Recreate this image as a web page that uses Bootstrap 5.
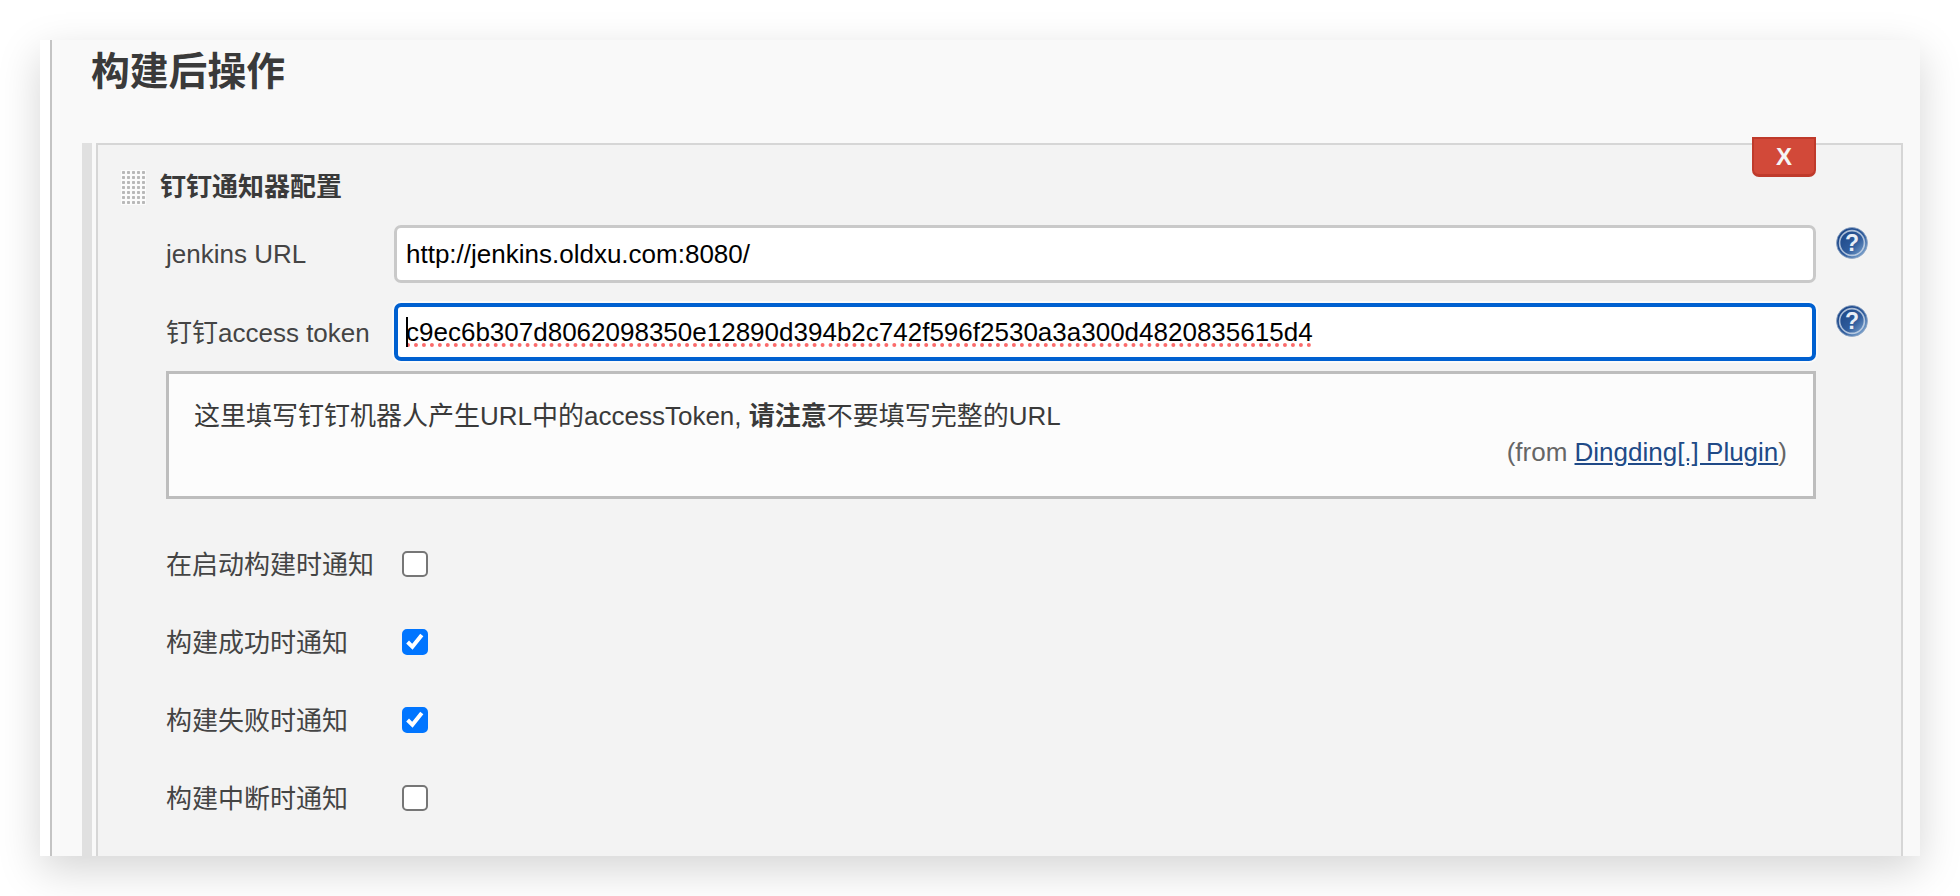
<!DOCTYPE html>
<html lang="zh-CN">
<head>
<meta charset="utf-8">
<title>构建后操作</title>
<link rel="stylesheet" href="https://cdn.jsdelivr.net/npm/bootstrap@5.3.0/dist/css/bootstrap.min.css">
<style>
html,body{height:896px;overflow:hidden;background:#fff}
body{padding:40px;font-family:"Liberation Sans","Noto Sans CJK SC",sans-serif;font-size:26px;color:#333}
.shot-window{height:816px;background:#fff;padding-left:10px;overflow:hidden;box-shadow:0 14px 40px rgba(0,0,0,.17)}
.shot-inner{height:100%;background:#f9f9f9;border-left:2px solid #c4c4c4;display:flex;flex-direction:column}
.shot-heading{font-size:38.8px;line-height:50px;font-weight:700;margin:7px 0 46px 39px;color:#3a3a3a}
.shot-stripe{flex:1 1 auto;margin:0 17px 0 30px;border-left:10px solid #e0e0e0;padding-left:4px;display:flex;min-height:0}
.shot-panel{flex:1 1 auto;position:relative;background:#f3f3f3;border:solid #d6d6d6;border-width:2px 2px 0 2px;padding:25px 33px 0 23px}
.shot-close{position:absolute;top:-8px;right:85px;width:64px;height:40px;padding:0;background:#d24939;border:solid #bf3a2b;border-width:2px 2px 3px;border-radius:0 0 7px 7px;color:#f5f5f5;font:700 24px/34px "Liberation Sans",sans-serif}
.shot-close:hover{background:#d24939;color:#f5f5f5}
.shot-titlerow{height:35px;margin-bottom:20px;gap:14px}
.shot-grip{width:25px;height:35px;flex:none;background:#fbfbfb radial-gradient(circle,#b8b8b8 38%,transparent 50%) 0 0/5px 5px}
.shot-title{font-size:26px;line-height:35px;font-weight:700;color:#3a3a3a}
.shot-form{padding-left:45px}
.shot-label{width:228px;flex:none;color:#444;margin:0}
.shot-label-low{padding-top:2px}
.shot-field{flex:1 1 auto;position:relative;min-width:0}
.form-control.shot-input{height:58px;font-size:26px;color:#000;background:#fff;border:3px solid #c9c9c9;border-radius:7px;padding:0 9px;font-family:"Liberation Sans",sans-serif;box-shadow:none}
.form-control.shot-focused{border:4px solid #0060d0;padding:0 8px;box-shadow:0 0 0 2px #fafafa;text-decoration:underline dotted #fb6b6b 4px;text-underline-offset:3px}
.shot-caret{position:absolute;left:12px;top:14px;width:2px;height:30px;background:#000}
.shot-help{width:32px;height:32px;flex:none;margin:2px 0 0 20px;display:block}
.shot-row{height:58px;margin-bottom:20px}
.shot-row-second{margin-bottom:10px}
.shot-note{height:128px;margin-right:52px;background:#fcfcfc;border:3px solid #bdbdbd;padding:24px 26px 0 25px;line-height:36px;color:#3a3a3a}
.shot-from{text-align:right;color:#666}
.shot-from a{color:#204a87}
.shot-checks{margin-top:45px;gap:38px}
.shot-check{height:40px;color:#444}
.shot-check .shot-label{width:236px;padding-top:2px}
.form-check-input.shot-box{width:26px;height:26px;margin:0 0 1px;border:2px solid #767676;border-radius:5px;background-color:#fff;box-shadow:none}
.form-check-input.shot-box:checked{background-color:#0075ff;border-color:#0075ff;background-size:100% 100%;background-image:url("data:image/svg+xml,%3Csvg xmlns='http://www.w3.org/2000/svg' viewBox='0 0 22 22'%3E%3Cpath d='M3.6 11l4.8 4.8L17.8 4' fill='none' stroke='%23fff' stroke-width='4'/%3E%3C/svg%3E")}
</style>
</head>
<body>
<svg width="0" height="0" class="position-absolute">
  <defs>
    <linearGradient id="helpFill" x1="0.15" y1="0.15" x2="0.9" y2="0.9">
      <stop offset="0" stop-color="#1d4788"/><stop offset=".55" stop-color="#2f5c9c"/><stop offset="1" stop-color="#7fa6d0"/>
    </linearGradient>
    <symbol id="helpIcon" viewBox="0 0 32 32">
      <circle cx="16" cy="16" r="15.5" fill="url(#helpFill)" stroke="#8fa6c4" stroke-width=".8"/>
      <circle cx="16" cy="16" r="12.4" fill="none" stroke="#cfdbea" stroke-width="1.6" opacity=".8"/>
      <text x="16" y="23.5" text-anchor="middle" font-family="Liberation Sans" font-weight="700" font-size="23" fill="#e9eef6">?</text>
    </symbol>
  </defs>
</svg>
<div class="shot-window">
  <div class="shot-inner">
    <div class="shot-heading">构建后操作</div>
    <div class="shot-stripe">
      <div class="shot-panel">
        <button type="button" class="btn shot-close">X</button>
        <div class="d-flex align-items-center shot-titlerow">
          <div class="shot-grip"></div>
          <div class="shot-title">钉钉通知器配置</div>
        </div>
        <div class="shot-form">
          <div class="d-flex align-items-center shot-row">
            <label class="shot-label">jenkins URL</label>
            <div class="shot-field"><input class="form-control shot-input" value="http://jenkins.oldxu.com:8080/"></div>
            <svg class="shot-help align-self-start"><use href="#helpIcon"/></svg>
          </div>
          <div class="d-flex align-items-center shot-row shot-row-second">
            <label class="shot-label shot-label-low">钉钉access token</label>
            <div class="shot-field">
              <input class="form-control shot-input shot-focused" spellcheck="false" value="c9ec6b307d8062098350e12890d394b2c742f596f2530a3a300d4820835615d4">
              <span class="shot-caret"></span>
            </div>
            <svg class="shot-help align-self-start"><use href="#helpIcon"/></svg>
          </div>
          <div class="shot-note">
            <div>这里填写钉钉机器人产生URL中的accessToken, <b>请注意</b>不要填写完整的URL</div>
            <div class="shot-from">(from <a href="#">Dingding[.] Plugin</a>)</div>
          </div>
          <div class="d-flex flex-column shot-checks">
            <div class="d-flex align-items-center shot-check"><label class="shot-label">在启动构建时通知</label><input class="form-check-input shot-box" type="checkbox"></div>
            <div class="d-flex align-items-center shot-check"><label class="shot-label">构建成功时通知</label><input class="form-check-input shot-box" type="checkbox" checked></div>
            <div class="d-flex align-items-center shot-check"><label class="shot-label">构建失败时通知</label><input class="form-check-input shot-box" type="checkbox" checked></div>
            <div class="d-flex align-items-center shot-check"><label class="shot-label">构建中断时通知</label><input class="form-check-input shot-box" type="checkbox"></div>
          </div>
        </div>
      </div>
    </div>
  </div>
</div>
<script src="https://cdn.jsdelivr.net/npm/bootstrap@5.3.0/dist/js/bootstrap.bundle.min.js"></script>
</body>
</html>
